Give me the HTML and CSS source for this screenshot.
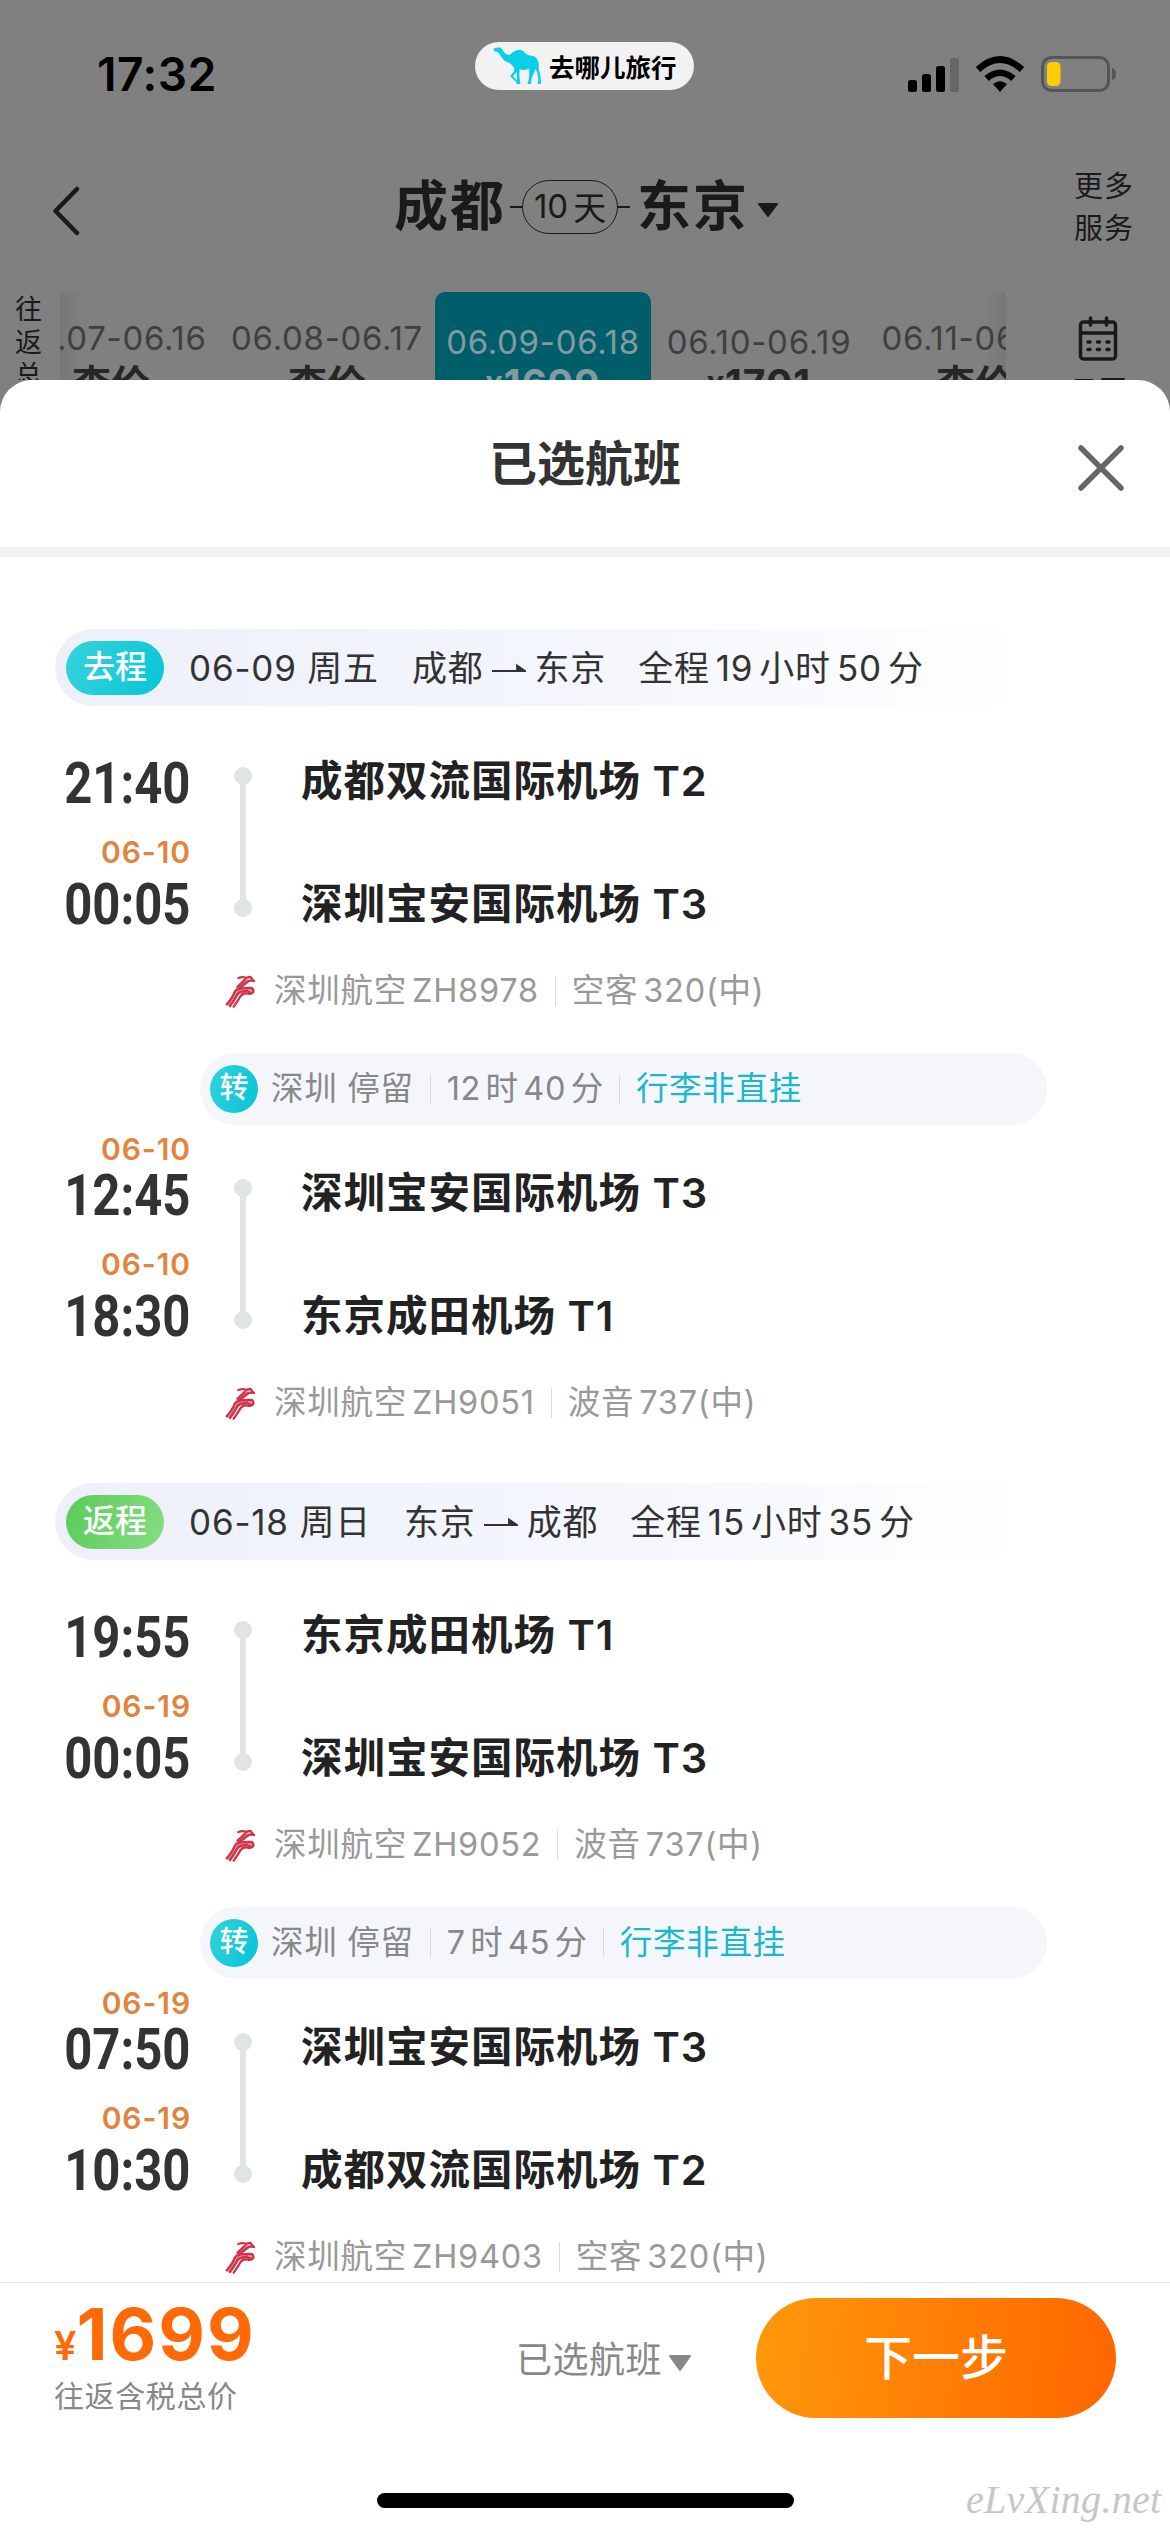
FILE: index.html
```html
<!DOCTYPE html>
<html lang="zh-CN">
<head>
<meta charset="utf-8">
<title>已选航班</title>
<link rel="stylesheet" href="styles.css">
</head>
<body>
<svg width="0" height="0" class="defs">
  <symbol id="shenzhen-air" viewBox="0 0 144 144">
    <g fill="none" stroke="#e58a96" stroke-width="12" stroke-linecap="round" stroke-linejoin="round">
      <path d="M84 42 L60 64 M32 114 Q50 94 56 78 L96 73"/>
    </g>
    <g fill="none" stroke="#cf3348" stroke-width="7" stroke-linecap="round" stroke-linejoin="round">
      <path d="M61 36 Q75 31 84 36 Q91 33 98 33 Q103 41 108 45 Q98 42 92 45 Q78 55 64 68"/>
      <path d="M80 42 L60 62"/>
      <path d="M26 115 Q42 97 48 82 Q52 69 70 67 Q92 65 101 66 Q110 72 103 79 Q98 83 92 78"/>
      <path d="M36 120 Q50 101 57 87 Q62 77 74 76 L88 74"/>
      <path d="M47 122 Q61 103 67 91 Q76 79 90 83 Q99 86 106 78"/>
    </g>
  </symbol>
</svg>
<div class="screen">
  <i class="blob blob-a"></i><i class="blob blob-b"></i><i class="blob blob-c"></i>
  <header class="status">
    <time class="clock">17:32</time>
    <div class="brand">
      <svg class="camel" viewBox="0 0 180 144"><path fill="#0bcfe8" d="M25 20 L32 17 L45 16 L51 21 Q55 29 60 34 Q68 42 75 38 L83 31 Q92 23 102 23 Q113 23 120 33 Q129 42 141 41 Q153 43 158 55 Q163 67 161 78 Q164 92 167 108 L168 126 L158 126 L160 114 Q160 96 152 80 Q146 94 140 109 L138 126 L127 126 L131 113 Q134 98 132 80 Q112 87 104 81 L103 102 L106 126 L94 126 L96 108 L95 91 L84 101 L99 121 L93 120 L76 103 Q76 99 86 90 L88 78 Q80 64 66 60 Q54 55 47 42 Q42 33 38 30 L27 28 Z"/></svg>
      <span>去哪儿旅行</span>
    </div>
    <svg class="signals" viewBox="0 0 210 40">
      <rect x="0" y="24" width="9" height="12" rx="2.5"/><rect x="14" y="18" width="9" height="18" rx="2.5"/><rect x="28" y="10" width="9" height="26" rx="2.5"/><rect x="42" y="2" width="9" height="34" rx="2.5" fill="#666"/>
      <g fill="none" stroke="#000" stroke-width="6.5"><path d="M70 13.5 Q92 -6.500 114 13.5"/><path d="M78.500 22.500 Q92 11 105.500 22.500"/></g>
      <path d="M85 28 Q92 22.500 99 28 L92 36 Z"/>
      <rect x="134.500" y="1.500" width="66" height="33" rx="9" fill="none" stroke="#555" stroke-width="3"/>
      <rect x="139" y="6" width="13.500" height="24" rx="4.500" fill="#fc0"/>
      <path d="M204 12 Q208 13 208 18 Q208 23 204 24 Z" fill="#555"/>
    </svg>
  </header>
  <nav class="nav">
    <svg class="back" viewBox="0 0 28 50"><path d="M25 3 L3.500 25 L25 47" fill="none" stroke="#1a1a1a" stroke-width="4.500" stroke-linecap="round" stroke-linejoin="round"/></svg>
    <div class="route">
      <b>成都</b><i></i><span class="days">10<em>天</em></span><i></i><b>东京</b>
      <svg viewBox="0 0 22 15"><path d="M2 1 H20 L11 13 Z" fill="#1a1a1a" stroke="#1a1a1a" stroke-width="2" stroke-linejoin="round"/></svg>
    </div>
    <div class="more">更多<br>服务</div>
  </nav>
  <section class="calendar">
    <div class="vert">往返总</div>
    <div class="days-strip">
      <div class="days-row">
        <div class="day"><span>06.07-06.16</span><b>查价</b></div>
        <div class="day"><span>06.08-06.17</span><b>查价</b></div>
        <div class="day priced active"><span>06.09-06.18</span><b><small>¥</small>1699</b></div>
        <div class="day priced"><span>06.10-06.19</span><b><small>¥</small>1701</b></div>
        <div class="day"><span>06.11-06.20</span><b>查价</b></div>
      </div>
    </div>
    <div class="month">
      <svg viewBox="0 0 40 46"><g fill="none" stroke="#1a1a1a" stroke-width="3.500" stroke-linecap="round"><rect x="2.500" y="6" width="35" height="37" rx="3"/><path d="M3 17 H37 M12.500 2 V9 M28.500 2 V9"/><path d="M10 26 H12 M19.500 26 H21.500 M29 26 H31 M10 33.500 H12 M19.500 33.500 H21.500 M29 33.500 H31"/></g></svg>
      <span>日历</span>
    </div>
  </section>

  <main class="sheet">
    <header class="sheet-head">
      <h1>已选航班</h1>
      <svg class="close" viewBox="0 0 48 48"><path d="M4 4 L44 44 M44 4 L4 44" stroke="#666" stroke-width="5.500" stroke-linecap="round"/></svg>
    </header>
    <div class="sheet-body">
      <section class="trip">
        <div class="trip-head">
          <span class="badge">去程</span>
          <span class="when">06-09 周五</span>
          <span class="path">成都<svg viewBox="0 0 34 14"><path d="M0 9 H33 L25 3.500 V9" fill="#333" stroke="#333" stroke-width="1.800"/></svg>东京</span>
          <span class="total">全程<u>19</u>小时<u>50</u>分</span>
        </div>
        <div class="leg first">
          <div class="stops">
            <div class="times"><small></small><time>21:40</time><small>06-10</small><time>00:05</time></div>
            <div class="rail"></div>
            <div class="ports"><span>成都双流国际机场 T2</span><span>深圳宝安国际机场 T3</span></div>
          </div>
          <div class="carrier"><svg><use href="#shenzhen-air"/></svg><span>深圳航空<u>ZH8978</u></span><i></i><span>空客<u>320(中)</u></span></div>
        </div>
        <div class="transfer"><b>转</b><span>深圳 停留</span><i></i><span class="wait">12<u>时</u>40<u>分</u></span><i></i><strong>行李非直挂</strong></div>
        <div class="leg">
          <div class="stops">
            <div class="times"><small>06-10</small><time>12:45</time><small>06-10</small><time>18:30</time></div>
            <div class="rail"></div>
            <div class="ports"><span>深圳宝安国际机场 T3</span><span>东京成田机场 T1</span></div>
          </div>
          <div class="carrier"><svg><use href="#shenzhen-air"/></svg><span>深圳航空<u>ZH9051</u></span><i></i><span>波音<u>737(中)</u></span></div>
        </div>
      </section>
      <section class="trip">
        <div class="trip-head">
          <span class="badge return">返程</span>
          <span class="when">06-18 周日</span>
          <span class="path">东京<svg viewBox="0 0 34 14"><path d="M0 9 H33 L25 3.500 V9" fill="#333" stroke="#333" stroke-width="1.800"/></svg>成都</span>
          <span class="total">全程<u>15</u>小时<u>35</u>分</span>
        </div>
        <div class="leg first">
          <div class="stops">
            <div class="times"><small></small><time>19:55</time><small>06-19</small><time>00:05</time></div>
            <div class="rail"></div>
            <div class="ports"><span>东京成田机场 T1</span><span>深圳宝安国际机场 T3</span></div>
          </div>
          <div class="carrier"><svg><use href="#shenzhen-air"/></svg><span>深圳航空<u>ZH9052</u></span><i></i><span>波音<u>737(中)</u></span></div>
        </div>
        <div class="transfer"><b>转</b><span>深圳 停留</span><i></i><span class="wait">7<u>时</u>45<u>分</u></span><i></i><strong>行李非直挂</strong></div>
        <div class="leg">
          <div class="stops">
            <div class="times"><small>06-19</small><time>07:50</time><small>06-19</small><time>10:30</time></div>
            <div class="rail"></div>
            <div class="ports"><span>深圳宝安国际机场 T3</span><span>成都双流国际机场 T2</span></div>
          </div>
          <div class="carrier"><svg><use href="#shenzhen-air"/></svg><span>深圳航空<u>ZH9403</u></span><i></i><span>空客<u>320(中)</u></span></div>
        </div>
      </section>
    </div>
    <footer class="foot">
      <div class="price"><div class="amount"><small>¥</small>1699</div><div class="caption">往返含税总价</div></div>
      <div class="chosen">已选航班<svg viewBox="0 0 24 18"><path d="M2 2 H22 L12 16 Z" fill="#888" stroke="#888" stroke-width="2" stroke-linejoin="round"/></svg></div>
      <button class="next">下一步</button>
    </footer>
    <i class="home"></i>
    <span class="mark">eLvXing.net</span>
  </main>
</div>
</body>
</html>
```
FILE: styles.css
```css
* { box-sizing: border-box; margin: 0; padding: 0; }
body { width: 1170px; height: 2532px; overflow: hidden; font-family: Inter, "Noto Sans CJK SC", sans-serif; }
i, em { font-style: normal; }
u { text-decoration: none; }
svg { display: block; flex: none; }
.defs { position: absolute; }
.screen { position: relative; display: flex; flex-direction: column; height: 2532px; background: #808080; color: #1a1a1a; }

.blob { position: absolute; top: 83px; width: 97px; height: 97px; border-radius: 50%; background: #7f7f7f; }
.blob-a { left: 129px; }
.blob-b { left: 243px; }
.blob-c { left: 457px; }

.status { position: relative; display: flex; height: 130px; padding: 42px 53px 0 97px; }
.clock { width: 378px; font-size: 46px; line-height: 65px; letter-spacing: .6px; font-weight: 600; color: #000; }
.brand { display: flex; align-items: center; width: 219px; height: 48px; padding-left: 10px; border-radius: 24px; background: #f2f2f2; color: #000; }
.brand span { margin: -2px 0 0 4px; font-size: 25.5px; font-weight: 700; white-space: nowrap; }
.camel { width: 60px; height: 48px; }
.signals { width: 210px; height: 40px; margin: 14px -1px 0 auto; }

.nav { display: flex; height: 162px; padding: 0 36px 0 52px; }
.back { width: 28px; height: 50px; margin-top: 56px; }
.route { display: flex; align-items: center; height: 60px; margin: 47px 0 0 314px; }
.route b { font-size: 54px; line-height: 60px; letter-spacing: 2px; font-weight: 700; }
.route i { width: 12px; height: 2px; background: #1a1a1a; }
.route b + i { margin-left: 4px; }
.route i + b { margin-left: 7px; }
.route svg { width: 22px; height: 15px; margin: 6px 0 0 8px; }
.days { display: flex; align-items: center; justify-content: center; width: 96px; height: 54px; padding-bottom: 2px; border: 1.5px solid #1a1a1a; border-radius: 27px; font-size: 33px; }
.days em { margin-left: 5px; }
.more { margin: 36px 0 0 auto; font-size: 29px; line-height: 42px; letter-spacing: 1px; }

.calendar { display: flex; height: 88px; overflow: hidden; }
.vert { width: 60px; padding: 1px 17px 0 15px; font-size: 27px; line-height: 33px; word-break: break-all; }
.days-strip { flex: none; width: 946px; overflow: hidden; background: linear-gradient(90deg, #777, #808080 22px, #808080 924px, #777); }
.days-row { display: flex; margin-left: -57px; }
.day { flex: none; width: 216px; height: 130px; padding-top: 27px; border-radius: 10px; text-align: center; white-space: nowrap; }
.day span { display: block; font-size: 33px; line-height: 38px; letter-spacing: .7px; color: #3f3f3f; }
.day b { display: block; font-size: 39px; line-height: 50px; margin-top: 2px; color: #262626; }
.day.priced { padding-top: 31px; }
.day.priced b { margin-top: -2px; letter-spacing: 1px; }
.day small { font-size: 30px; }
.day.active { background: #005e6b; }
.day.active span, .day.active b { color: #819ba0; }
.month { flex: none; display: flex; flex-direction: column; align-items: center; width: 164px; padding: 24px 0 0 20px; }
.month svg { width: 40px; height: 46px; }
.month span { margin-top: 13px; font-size: 28px; line-height: 32px; }

.sheet { position: relative; display: flex; flex-direction: column; height: 2152px; border-radius: 32px 32px 0 0; background: #fff; overflow: hidden; }
.sheet-head { display: grid; grid-template-columns: 1fr auto 1fr; align-items: center; height: 177px; padding: 0 45px; border-bottom: 10px solid #f3f3f3; }
.sheet-head h1 { grid-column: 2; font-size: 48px; line-height: 60px; font-weight: 600; color: #333; white-space: nowrap; }
.sheet-head .close { justify-self: end; width: 48px; height: 48px; margin-top: 9px; }
.sheet-body { height: 1725px; padding-top: 72px; overflow: hidden; }
.trip { height: 854px; }
.trip-head { display: flex; align-items: center; width: 985px; height: 77px; margin-left: 55px; padding-left: 11px; border-radius: 39px; background: linear-gradient(90deg, #edf0f9, #f5f7fd 60%, #fff); font-size: 35px; line-height: 50px; letter-spacing: .8px; color: #333; white-space: nowrap; }
.badge { width: 98px; height: 54px; border-radius: 27px; background: linear-gradient(110deg, #35d3dc, #08c5d7); color: #fff; font-size: 32px; line-height: 52px; letter-spacing: 0; font-weight: 500; text-align: center; }
.badge.return { background: linear-gradient(110deg, #5bcb59, #86dd83); }
.when { margin-left: 25px; }
.path { display: flex; align-items: center; margin-left: 33px; }
.path svg { width: 34px; height: 14px; margin: 2px 9px 0 8px; }
.total { margin-left: 32px; }
.total u { margin: 0 6px; }

.leg { padding-top: 9px; }
.leg.first { height: 347px; padding-top: 16px; }
.stops { display: flex; height: 248px; }
.times { display: flex; flex-direction: column; align-items: flex-end; width: 191px; }
.times small { height: 30px; font-size: 30px; line-height: 31px; letter-spacing: .9px; font-weight: 600; color: #e0853f; }
.times time { height: 45px; margin: 8px 1px 32px 0; font-family: Roboto, sans-serif; font-size: 58px; line-height: 46px; font-weight: 700; color: #333; transform: scaleX(.845); transform-origin: right; }
.times time:last-child { margin-top: 14px; }
.rail { position: relative; width: 18px; height: 150px; margin: 45px 0 0 43px; background: linear-gradient(#e0e4e5, #e0e4e5) center / 6px 130px no-repeat; }
.rail::before, .rail::after { content: ""; position: absolute; left: 0; width: 18px; height: 18px; border-radius: 50%; background: #e0e4e5; }
.rail::before { top: 0; }
.rail::after { bottom: 0; }
.ports { display: flex; flex-direction: column; gap: 63px; padding: 29px 0 0 49px; font-size: 41.500px; line-height: 60px; letter-spacing: 1px; font-weight: 600; color: #222; white-space: nowrap; }
.carrier { display: flex; align-items: center; height: 42px; padding-left: 218px; font-size: 32.500px; line-height: 42px; letter-spacing: .75px; color: #999; white-space: nowrap; }
.carrier svg { width: 48px; height: 48px; margin: -2px 8px 0 0; }
.carrier u { margin-left: 5px; }
.carrier i, .transfer i { width: 1px; height: 30px; margin: 0 16px; background: #ddd; }
.transfer { display: flex; align-items: center; width: 847px; height: 72px; margin-left: 200px; padding-left: 10px; border-radius: 36px; background: #f4f6fc; font-size: 32.500px; line-height: 48px; letter-spacing: .7px; color: #888; white-space: nowrap; }
.transfer b { width: 48px; height: 48px; margin-right: 13px; border-radius: 50%; background: linear-gradient(110deg, #33d3dd, #06c3d5); color: #fff; font-size: 29px; line-height: 46px; letter-spacing: 0; font-weight: 500; text-align: center; }
.transfer strong { font-weight: 400; color: #19b9c9; }
.wait u { margin: 0 4.500px; }
.wait u:last-child { margin-right: -1px; }

.foot { display: flex; height: 250px; border-top: 1.500px solid #ddd; background: #fff; }
.price { flex: none; width: 516px; padding: 14px 0 0 54px; }
.amount { font-size: 72px; line-height: 74px; letter-spacing: 2px; font-weight: 700; color: #ff6a07; }
.amount small { font-size: 40px; letter-spacing: 0; font-weight: 600; }
.caption { font-size: 30px; line-height: 44px; margin-top: -9px; letter-spacing: .6px; color: #888; }
.chosen { flex: none; display: flex; align-items: center; width: 240px; height: 60px; margin-top: 44px; font-size: 36px; letter-spacing: .5px; color: #888; white-space: nowrap; }
.chosen svg { width: 24px; height: 18px; margin: 11px 0 0 6px; }
.next { flex: none; width: 360px; height: 120px; margin-top: 15px; padding-bottom: 8px; border: 0; border-radius: 60px; background: linear-gradient(95deg, #ff980b, #ff6600); color: #fff; font: 500 48px "Noto Sans CJK SC", sans-serif; }
.home { position: absolute; left: 377px; bottom: 24px; width: 417px; height: 15px; border-radius: 8px; background: #000; }
.mark { position: absolute; left: 966px; bottom: 10px; font: italic 40px/44px "Liberation Serif", serif; letter-spacing: .3px; color: #c6c6c6; }
```
